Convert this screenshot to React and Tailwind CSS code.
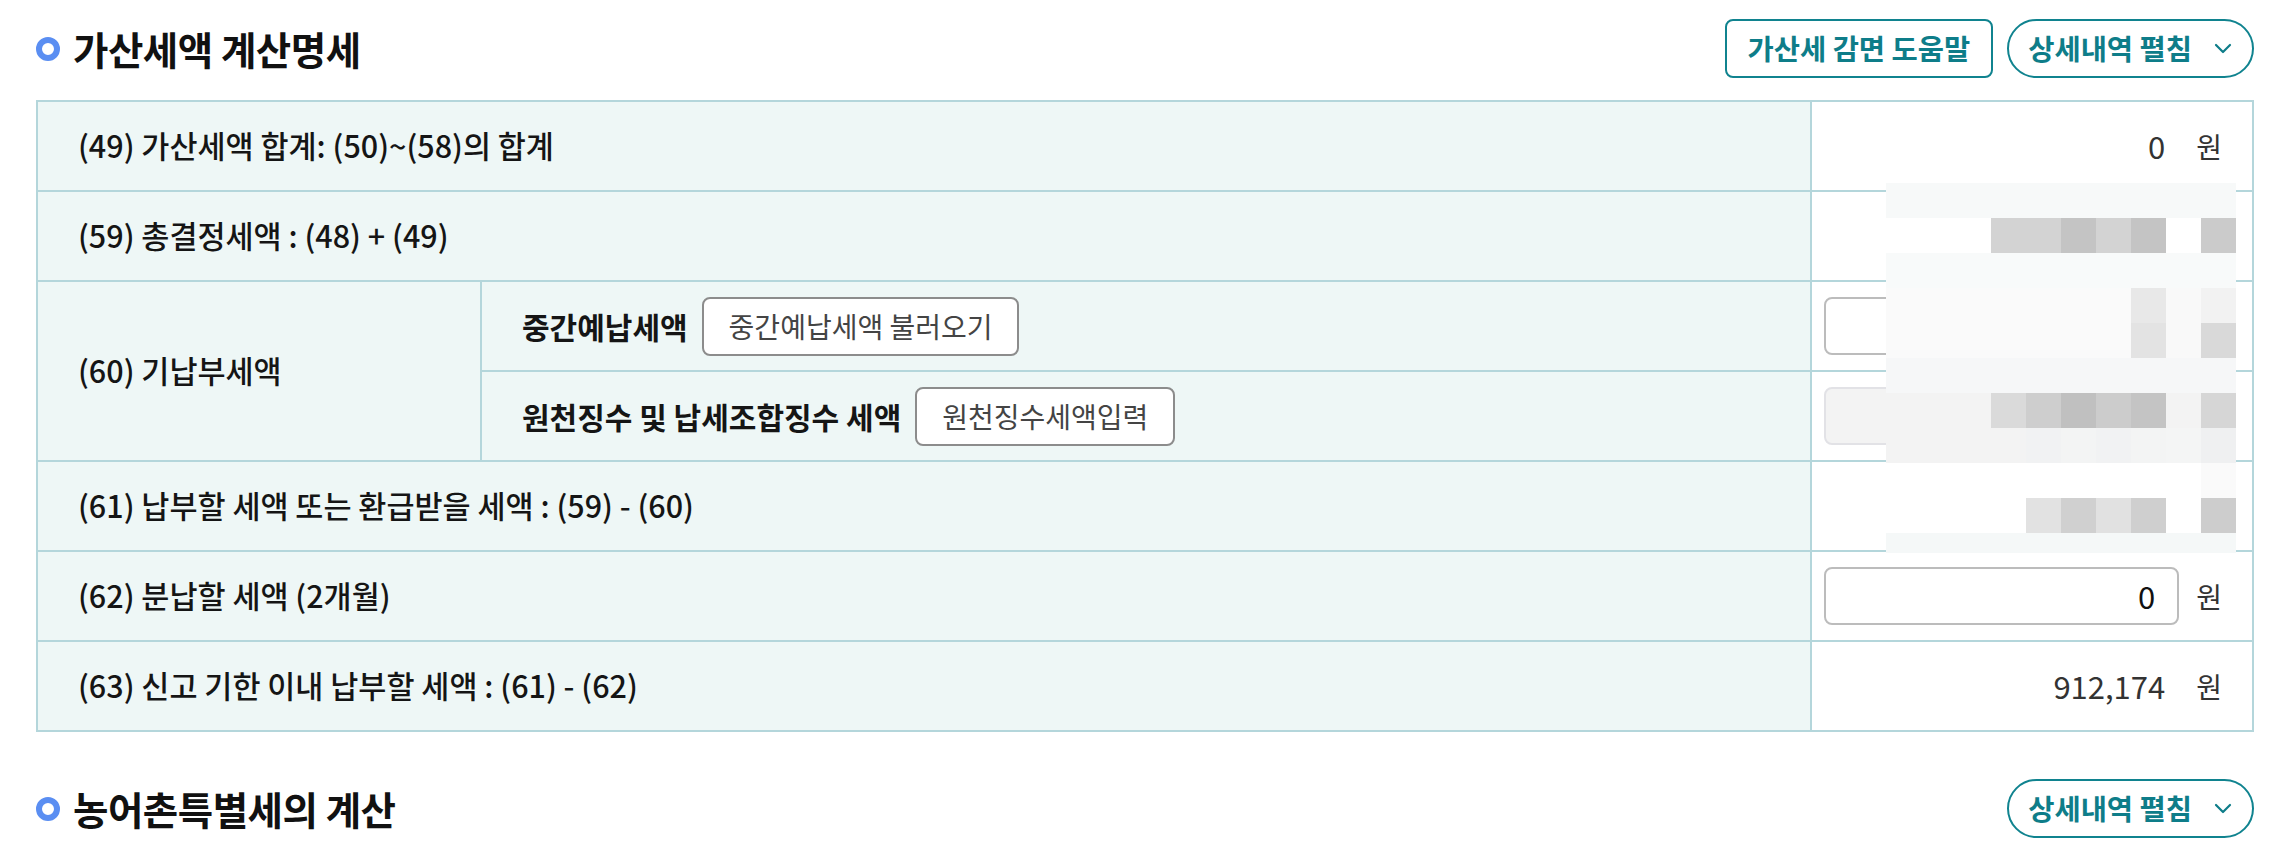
import React from 'react';

const W = '#ffffff';

// blurred (mosaic) block over the hidden amounts, 35px cells
const mosaic = [
  Array(10).fill('#f7f9f9'),
  [W, W, W, '#d3d3d3', '#d3d3d3', '#c4c4c4', '#d3d3d3', '#c4c4c4', W, '#cbcbcb'],
  Array(10).fill('#f8fafa'),
  [...Array(7).fill('#fafafa'), '#e8e8e8', '#f9f9f9', '#f2f2f2'],
  [...Array(7).fill('#fafafa'), '#e3e3e3', '#f9f9f9', '#d9d9d9'],
  Array(10).fill('#f6f7f8'),
  ['#f3f3f3', '#f3f3f3', '#f3f3f3', '#dadada', '#cecece', '#c0c0c0', '#cccccc', '#c4c4c4', '#f3f3f3', '#d6d6d6'],
  ['#f3f3f3', '#f3f3f3', '#f3f3f3', '#f3f3f3', '#f1f2f3', '#f3f4f4', '#f1f2f3', '#f3f4f4', '#f4f5f5', '#eff0f1'],
  [...Array(9).fill(W), '#fafafa'],
  [W, W, W, W, '#e2e2e2', '#d0d0d0', '#e1e1e1', '#cfcfcf', W, '#cdcdcd'],
  Array(10).fill('#f5f8f8'),
];

const Chevron = () => (
  <svg width="18" height="11" viewBox="0 0 18 11" fill="none" stroke="currentColor" strokeWidth="2.2" strokeLinecap="round" strokeLinejoin="round">
    <polyline points="2,2 9,9 16,2" />
  </svg>
);

const ExpandButton = () => (
  <button className="h-[59px] flex items-center gap-[22px] pl-[19px] pr-[20px] rounded-full border-2 border-[#10838f] text-[#0e7d89] text-[28.5px] font-semibold">
    <span>상세내역 펼침</span>
    <Chevron />
  </button>
);

const SectionHeader = ({ title, children }) => (
  <div className="h-[59px] flex items-center justify-between">
    <div className="flex items-center gap-[13px]">
      <span className="w-[24px] h-[24px] rounded-full border-[6px] border-[#5a8ef2]" />
      <h2 className="text-[38.5px] font-bold text-[#111] tracking-[-0.5px]">{title}</h2>
    </div>
    <div className="flex items-center gap-[14px]">{children}</div>
  </div>
);

const Label = ({ children, ...props }) => (
  <td {...props} className="border-2 border-[#b4d6db] bg-[#eef7f6] px-[40px] text-[30.5px] font-medium text-[#151515]">
    {children}
  </td>
);

const Won = ({ className = '' }) => <span className={`text-[28px] text-[#333] ${className}`}>원</span>;

const Amount = ({ value }) => (
  <td className="border-2 border-[#b4d6db] bg-white pr-[30px]">
    <div className="flex items-center justify-end">
      <span className="text-[31px] text-[#333]">{value}</span>
      <Won className="ml-[31px]" />
    </div>
  </td>
);

const InputCell = ({ value, disabled }) => (
  <td className="border-2 border-[#b4d6db] bg-white pl-[12px] pr-[30px]">
    <div className="flex items-center justify-end gap-[17px]">
      <div
        className={`w-[357px] h-[58px] rounded-[8px] border-2 flex items-center justify-end pr-[22px] text-[31px] text-[#111] ${
          disabled ? 'bg-[#f3f3f3] border-[#e2e2e6]' : 'bg-white border-[#bcbcbc]'
        }`}
      >
        {value}
      </div>
      <Won />
    </div>
  </td>
);

const GrayButton = ({ children }) => (
  <button className="h-[59px] px-[25px] rounded-[8px] border-2 border-[#8c8c8c] bg-white text-[28px] text-[#444]">
    {children}
  </button>
);

const App = () => {
  return (
    <div className="min-h-screen bg-white pl-[36px] pr-[16px] pt-[19px] font-['Noto_Sans_CJK_KR','Noto_Sans',sans-serif]">
      <SectionHeader title="가산세액 계산명세">
        <button className="h-[59px] px-[21px] rounded-[8px] border-2 border-[#10838f] text-[#0e7d89] text-[28.5px] font-semibold">
          가산세 감면 도움말
        </button>
        <ExpandButton />
      </SectionHeader>

      <div className="relative mt-[22px]">
        <table className="w-full table-fixed border-2 border-[#b4d6db]">
          <colgroup>
            <col className="w-[444px]" />
            <col className="w-[1330px]" />
            <col />
          </colgroup>
          <tbody>
            <tr className="h-[90px]">
              <Label colSpan={2}>(49) 가산세액 합계: (50)~(58)의 합계</Label>
              <Amount value="0" />
            </tr>
            <tr className="h-[90px]">
              <Label colSpan={2}>(59) 총결정세액 : (48) + (49)</Label>
              <Amount value="" />
            </tr>
            <tr className="h-[90px]">
              <Label rowSpan={2}>(60) 기납부세액</Label>
              <td className="border-2 border-[#b4d6db] bg-[#eef7f6] px-[40px]">
                <div className="flex items-center gap-[14px]">
                  <span className="text-[30px] font-semibold text-[#151515]">중간예납세액</span>
                  <GrayButton>중간예납세액 불러오기</GrayButton>
                </div>
              </td>
              <InputCell value="" />
            </tr>
            <tr className="h-[90px]">
              <td className="border-2 border-[#b4d6db] bg-[#eef7f6] px-[40px]">
                <div className="flex items-center gap-[14px]">
                  <span className="text-[30px] font-semibold text-[#151515]">원천징수 및 납세조합징수 세액</span>
                  <GrayButton>원천징수세액입력</GrayButton>
                </div>
              </td>
              <InputCell value="" disabled />
            </tr>
            <tr className="h-[90px]">
              <Label colSpan={2}>(61) 납부할 세액 또는 환급받을 세액 : (59) - (60)</Label>
              <Amount value="" />
            </tr>
            <tr className="h-[90px]">
              <Label colSpan={2}>(62) 분납할 세액 (2개월)</Label>
              <InputCell value="0" />
            </tr>
            <tr className="h-[90px]">
              <Label colSpan={2}>(63) 신고 기한 이내 납부할 세액 : (61) - (62)</Label>
              <Amount value="912,174" />
            </tr>
          </tbody>
        </table>

        {/* masked amounts */}
        <div className="absolute left-[1850px] top-[83px] grid grid-cols-[repeat(10,35px)] grid-rows-[repeat(10,35px)_20px]">
          {mosaic.flat().map((c, i) => (
            <div key={i} style={{ backgroundColor: c }} />
          ))}
        </div>
      </div>

      <div className="mt-[47px]">
        <SectionHeader title="농어촌특별세의 계산">
          <ExpandButton />
        </SectionHeader>
      </div>
    </div>
  );
};

export default App;
